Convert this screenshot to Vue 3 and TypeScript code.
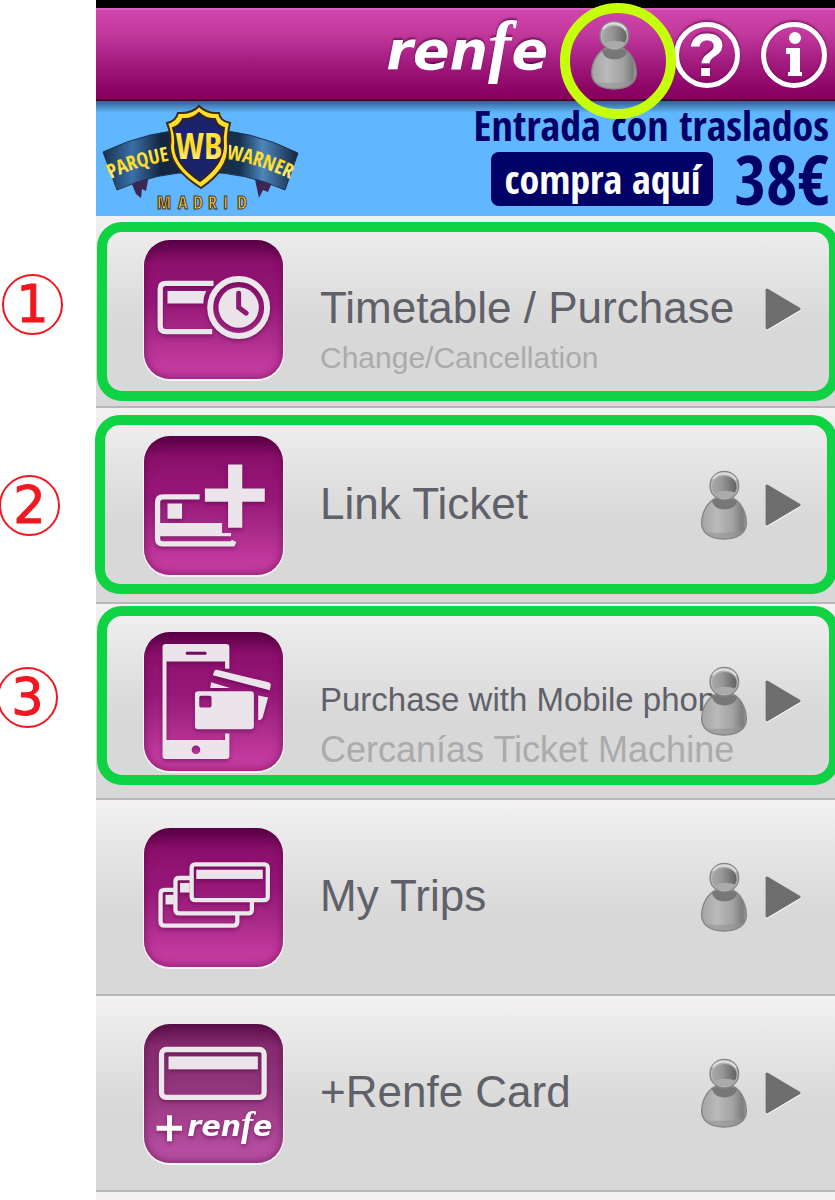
<script setup lang="ts">
interface MenuItem {
  id: string
  title: string
  subtitle?: string
  small?: boolean
  account: boolean
  viewBox: string
  mark?: number
}

const items: MenuItem[] = [
  { id: 'timetable', title: 'Timetable / Purchase', subtitle: 'Change/Cancellation', account: false, viewBox: '42 42 420 420', mark: 1 },
  { id: 'link', title: 'Link Ticket', account: true, viewBox: '42 45 420 420', mark: 2 },
  { id: 'mobile', title: 'Purchase with Mobile phone', subtitle: 'Cercanías Ticket Machine', small: true, account: true, viewBox: '42 36 420 420', mark: 3 },
  { id: 'trips', title: 'My Trips', account: true, viewBox: '42 39 420 420' },
  { id: 'card', title: '+Renfe Card', account: true, viewBox: '42 33 420 420' },
]
</script>

<template>
  <div class="page">
    <svg class="defs" aria-hidden="true">
      <defs>
        <linearGradient id="bodyFill" x1="0" x2="1">
          <stop offset="0" stop-color="#a4a4a4" />
          <stop offset="0.35" stop-color="#bababa" />
          <stop offset="0.7" stop-color="#a2a2a2" />
          <stop offset="0.92" stop-color="#7c7c7c" />
          <stop offset="1" stop-color="#a0a0a0" />
        </linearGradient>
        <linearGradient id="headFill" x1="0" x2="1">
          <stop offset="0" stop-color="#a8a8a8" />
          <stop offset="0.4" stop-color="#979797" />
          <stop offset="1" stop-color="#636363" />
        </linearGradient>
        <symbol id="person" viewBox="0 0 138 208">
          <path d="M43 84 C20 96 2 125 2 158 C2 188 28 206 69 206 C110 206 136 188 136 158 C136 125 119 96 97 84 Z" fill="url(#bodyFill)" stroke="#858585" stroke-width="4" />
          <path d="M12 184 C40 190 100 188 127 180 C116 198 95 203 69 203 C40 203 22 197 12 184 Z" fill="#949494" opacity="0.6" />
          <path d="M33 91 C45 82 96 82 108 92 C105 109 90 117 70 117 C50 117 37 108 33 91 Z" fill="#777" />
          <circle cx="70" cy="46" r="43" fill="#b5b5b5" stroke="#878787" stroke-width="4" />
          <path d="M36 26 C50 4 90 4 105 28" fill="none" stroke="#dedede" stroke-width="6" />
          <ellipse cx="70" cy="49" rx="37" ry="32" fill="url(#headFill)" />
          <path d="M38 70 C55 58 86 59 103 68 C89 88 50 89 38 70 Z" fill="#aaa" />
        </symbol>
      </defs>
    </svg>

    <main class="phone">
      <div class="status"></div>
      <header class="bar">
        <span class="logo">ren<span class="logo-f">f</span>e</span>
        <button class="account" type="button" aria-label="Account">
          <svg class="person"><use href="#person" /></svg>
          <span class="spot"></span>
        </button>
        <button class="round help" type="button" aria-label="Help">?</button>
        <button class="round info" type="button" aria-label="Information">
          <svg class="info-icon" viewBox="0 0 24 46" aria-hidden="true">
            <circle cx="13" cy="6" r="6" />
            <rect x="4" y="16" width="14" height="6" />
            <rect x="8" y="16" width="10" height="28" />
            <rect x="6" y="40" width="14" height="4" />
          </svg>
        </button>
      </header>

      <a class="banner" href="#offer">
        <svg class="park" viewBox="0 0 210 115" role="img" aria-label="Parque Warner Madrid">
          <defs>
            <linearGradient id="gold" x1="0" y1="0" x2="0" y2="1">
              <stop offset="0" stop-color="#fff27a" />
              <stop offset="0.5" stop-color="#ffd91c" />
              <stop offset="1" stop-color="#fff9c0" />
            </linearGradient>
            <linearGradient id="ribbon" x1="0" x2="1">
              <stop offset="0" stop-color="#18324f" />
              <stop offset="0.15" stop-color="#3a6fa8" />
              <stop offset="0.3" stop-color="#14243f" />
              <stop offset="0.7" stop-color="#17304f" />
              <stop offset="0.82" stop-color="#4c86bb" />
              <stop offset="1" stop-color="#122440" />
            </linearGradient>
            <path id="arcLeft" d="M15 78 Q42 64 85 58" />
            <path id="arcRight" d="M130 58 Q162 62 200 81" />
          </defs>
          <path d="M33 76 L53 74 L50 90 L46 88 L45 97 L40 93 Z" fill="#3c2754" />
          <path d="M158 74 L178 77 L172 91 L167 89 L163 97 Z" fill="#3c2754" />
          <path d="M7 51 Q55 28 104 28 Q154 28 202 52 L189 89 Q150 71 104 71 Q60 71 21 89 Z" fill="url(#ribbon)" stroke="#1b3552" stroke-width="1" />
          <text class="park-name"><textPath href="#arcLeft">PARQUE</textPath></text>
          <text class="park-name"><textPath href="#arcRight">WARNER</textPath></text>
          <path d="M103 5 Q111 13 123 12 Q124 20 134 22 Q131 34 132 46 Q133 68 105 87 Q75 68 74 46 Q76 34 71 22 Q80 20 82 12 Q96 13 103 5 Z" fill="#ffdf2b" stroke="#3b2a22" stroke-width="2" />
          <path d="M103 12 Q111 19 119 18 Q121 25 128 27 Q126 36 127 46 Q126 64 104 80 Q80 64 79 46 Q80 36 77 27 Q84 25 87 18 Q96 19 103 12 Z" fill="#1b246b" stroke="#332321" stroke-width="2" />
          <text class="wb" x="103" y="58">WB</text>
          <text class="madrid" x="61 82 97 112 127 141" y="108">MADRID</text>
        </svg>
        <span class="offer">
          <span class="offer-title">Entrada con traslados</span>
          <span class="offer-line">
            <span class="buy">compra aquí</span>
            <span class="price">38€</span>
          </span>
        </span>
      </a>

      <nav class="menu" aria-label="Main menu">
        <a v-for="item in items" :key="item.id" class="row" :class="item.id" :href="'#' + item.id">
          <span v-if="item.mark" class="mark">{{ item.mark }}</span>
          <span class="tile">
            <svg class="glyph" :viewBox="item.viewBox" aria-hidden="true">
              <template v-if="item.id === 'timetable'">
                <path class="line w16" d="M252 173 H108 Q91 173 91 190 V302 Q91 319 108 319 H248" />
                <path d="M113 196 H230 Q221 214 221 234 H113 Z" />
                <circle class="line w18" cx="328" cy="246" r="86" />
                <circle cx="328" cy="246" r="61" />
                <path class="hands" d="M328 203 V246 L351 263" />
              </template>
              <template v-else-if="item.id === 'link'">
                <path class="line w16" d="M210 229 H100 Q83 229 83 246 V355 Q83 371 98 371 H310 L314 362" />
                <rect x="113" y="249" width="44" height="46" />
                <path d="M85 308 H278 V338 H305 V348 H85 Z" />
                <path d="M296 131 H339 V204 H407 V244 H339 V322 H296 V244 H226 V204 H296 Z" />
              </template>
              <template v-else-if="item.id === 'mobile'">
                <path fill-rule="evenodd" d="M108 72 H290 Q300 72 300 82 V147 H287 V125 H110 V362 H287 V343 H300 V410 Q300 420 290 420 H108 Q98 420 98 410 V82 Q98 72 108 72 Z M172 96 Q168 96 168 100 Q168 105 172 105 H227 Q231 105 231 100 Q231 96 227 96 Z M199 379 A13 13 0 1 0 199 405 A13 13 0 1 0 199 379 Z" />
                <path d="M262 150 L418 188 Q426 190 425 198 L422 212 L250 167 L254 155 Q256 149 262 150 Z" />
                <path d="M245 188 L302 205 H242 Z" />
                <path d="M387 228 L417 234 L401 293 Q397 303 387 303 Z" />
                <path fill-rule="evenodd" d="M206 215 H364 Q374 215 374 225 V320 Q374 330 364 330 H206 Q196 330 196 320 V225 Q196 215 206 215 Z M214 229 Q209 229 209 234 V259 Q209 264 214 264 H240 Q246 264 246 259 V234 Q246 229 240 229 Z" />
              </template>
              <template v-else-if="item.id === 'trips'">
                <rect class="line w13" x="186" y="149" width="230" height="108" rx="10" />
                <rect x="200" y="165" width="201" height="28" />
                <path class="line w13" d="M181 190 H148 Q137 190 137 201 V286 Q137 297 148 297 H357 Q368 297 368 286 V262" />
                <rect x="151" y="205" width="29" height="29" />
                <path class="line w13" d="M132 226 H104 Q92 226 92 238 V322 Q92 334 104 334 H312 Q324 334 324 322 V302" />
                <rect x="107" y="241" width="25" height="29" />
              </template>
              <template v-else>
                <rect class="line w16" x="95" y="110" width="310" height="145" rx="14" />
                <rect x="116" y="131" width="270" height="39" />
                <path class="plus" d="M119 309 V387 M80 348 H157" />
                <text class="mini" x="173" y="372">ren<tspan class="mini-f">f</tspan>e</text>
              </template>
            </svg>
          </span>
          <span class="text">
            <span class="title" :class="{ small: item.small }">{{ item.title }}</span>
            <span v-if="item.subtitle" class="subtitle" :class="{ large: item.small }">{{ item.subtitle }}</span>
          </span>
          <svg v-if="item.account" class="person" aria-hidden="true"><use href="#person" /></svg>
          <svg class="arrow" viewBox="0 0 36 42" aria-hidden="true">
            <path d="M2 2 L34 21 L2 40 Z" />
          </svg>
          <span v-if="item.mark" class="frame"></span>
        </a>
      </nav>
    </main>
  </div>
</template>

<style>
body {
  margin: 0;
  background: #fff;
}
</style>

<style scoped>
.page {
  min-height: 100vh;
  overflow: hidden;
  font-family: "Liberation Sans", Arial, sans-serif;
}
.defs {
  position: absolute;
  width: 0;
  height: 0;
}
.phone {
  margin-left: 96px;
  min-height: 100vh;
  background: #f3f1f2;
}
.status {
  height: 8px;
  background: #000;
}
.bar {
  position: relative;
  z-index: 3;
  box-sizing: border-box;
  height: 93px;
  padding-right: 8px;
  display: flex;
  align-items: center;
  justify-content: flex-end;
  color: #fff;
  background: linear-gradient(#cf45ab, #c33a9f 25%, #a31c80 58%, #8b0363 90%, #880062);
  border-top: 2px solid #dd5fc0;
  border-bottom: 2px solid #2b1028;
}
button {
  padding: 0;
  border: 0;
  background: none;
  color: inherit;
  font: inherit;
}
.logo {
  margin-right: 43px;
  padding-bottom: 12px;
  font: italic bold 54px/70px "DejaVu Sans", sans-serif;
  text-shadow: 0 -2px 2px rgba(70, 0, 50, 0.6);
}
.logo-f {
  font: italic bold 70px/70px "Liberation Serif", serif;
}
.person {
  display: block;
  flex: none;
  width: 46px;
  height: 70px;
}
.account {
  position: relative;
  margin-right: 37px;
}
.spot {
  position: absolute;
  top: -17px;
  left: -31px;
  box-sizing: border-box;
  width: 116px;
  height: 116px;
  border: 10px solid #c6ff0a;
  border-radius: 50%;
}
.round {
  box-sizing: border-box;
  width: 66px;
  height: 66px;
  display: flex;
  align-items: center;
  justify-content: center;
  border: 5px solid #fff;
  border-radius: 50%;
  box-shadow: 0 -2px 2px rgba(70, 0, 50, 0.5), inset 0 -1px 2px rgba(70, 0, 50, 0.4);
}
.help {
  margin-right: 21px;
  font: bold 62px/56px "Liberation Sans", Arial, sans-serif;
  text-shadow: 0 -2px 2px rgba(70, 0, 50, 0.5);
}
.info-icon {
  width: 24px;
  height: 46px;
  fill: #fff;
}
.banner {
  position: relative;
  z-index: 2;
  height: 115px;
  display: flex;
  justify-content: space-between;
  background: linear-gradient(rgba(20, 40, 70, 0.6), rgba(20, 40, 70, 0) 12px), #60b6ff;
  color: #000066;
  text-decoration: none;
  font-family: "Open Sans Condensed", "DejaVu Sans Condensed", sans-serif;
  font-weight: bold;
  white-space: nowrap;
}
.park {
  flex: none;
  width: 210px;
  height: 115px;
}
.park-name {
  font-size: 20px;
  fill: url(#gold);
}
.wb {
  font-size: 36px;
  text-anchor: middle;
  fill: url(#gold);
}
.madrid {
  font-size: 18px;
  fill: #ffd34a;
  stroke: #4a3015;
  stroke-width: 1px;
}
.offer {
  display: flex;
  flex-direction: column;
  align-items: flex-end;
  padding-right: 6px;
}
.offer-title {
  font-size: 42px;
  line-height: 48px;
}
.offer-line {
  display: flex;
  gap: 22px;
  margin-top: 3px;
}
.buy {
  height: 54px;
  padding: 0 12px 0 14px;
  border-radius: 8px;
  background: #000066;
  color: #fff;
  font-size: 40px;
  line-height: 53px;
}
.price {
  font-size: 68px;
  line-height: 54px;
}
.menu {
  margin-top: -4px;
}
.row {
  position: relative;
  box-sizing: border-box;
  min-height: 196px;
  display: flex;
  align-items: center;
  padding: 0 34px 0 48px;
  background: linear-gradient(#f3f1f2, #dcdcdc 48%, #d8d8d8 60%);
  border-bottom: 2px solid #b9b7b8;
  color: #606168;
  text-decoration: none;
}
.tile {
  flex: none;
  width: 139px;
  height: 139px;
  margin-right: 37px;
  border-radius: 26px;
  background: linear-gradient(#5a0046, #8c0f6c 16%, #98187a 45%, #ab2b8a 68%, #c33a9f 90%);
  box-shadow: 0 1px 0 1px #f7f3f7, inset 0 0 10px rgba(80, 0, 60, 0.6);
}
.card .tile {
  background: linear-gradient(#5a1049, #862b70 16%, #92357c 45%, #a5408d 68%, #b44d9f 90%);
}
.glyph {
  display: block;
  width: 139px;
  height: 139px;
  fill: #ebe4ea;
  filter: drop-shadow(0 2px 2px rgba(80, 0, 60, 0.5));
}
.line {
  fill: none;
  stroke: #ebe8eb;
}
.w13 {
  stroke-width: 13px;
}
.w16 {
  stroke-width: 16px;
}
.w18 {
  stroke-width: 18px;
}
.hands {
  fill: none;
  stroke: #8c1a70;
  stroke-width: 15px;
  stroke-linecap: round;
}
.plus {
  stroke: #fff;
  stroke-width: 15px;
}
.mini {
  font: italic bold 86px "DejaVu Sans", sans-serif;
  fill: #fff;
}
.mini-f {
  font: italic bold 110px "Liberation Serif", serif;
}
.text {
  flex: 1;
  min-width: 0;
  align-self: flex-start;
  display: flex;
  flex-direction: column;
  padding-top: 70px;
  white-space: nowrap;
}
.title {
  font-size: 44px;
  line-height: 52px;
}
.title.small {
  font-size: 33px;
}
.subtitle {
  font-size: 30px;
  line-height: 48px;
  color: #ababab;
}
.subtitle.large {
  font-size: 36px;
}
.row .person {
  position: relative;
  margin-right: 18px;
}
.arrow {
  flex: none;
  width: 36px;
  height: 42px;
  fill: #6e6e6e;
  stroke: #6e6e6e;
  stroke-width: 3px;
  stroke-linejoin: round;
  filter: drop-shadow(0 1px 0 #fff);
}
.mark {
  position: absolute;
  left: -94px;
  top: 62px;
  box-sizing: border-box;
  width: 61px;
  height: 61px;
  border: 2px solid #f01820;
  border-radius: 50%;
  color: #f01820;
  text-align: center;
  font: 51px/57px "DejaVu Sans", sans-serif;
  -webkit-text-stroke: 1px #f01820;
}
.link .mark {
  left: -97px;
  top: 67px;
}
.mobile .mark {
  left: -99px;
  top: 63px;
}
.frame {
  position: absolute;
  top: 10px;
  left: 1px;
  right: -4px;
  height: 179px;
  box-sizing: border-box;
  border: 10px solid #10d343;
  border-radius: 25px;
}
.link .frame {
  top: 7px;
  left: -1px;
  right: -2px;
}
.mobile .frame {
  top: 2px;
}
</style>
